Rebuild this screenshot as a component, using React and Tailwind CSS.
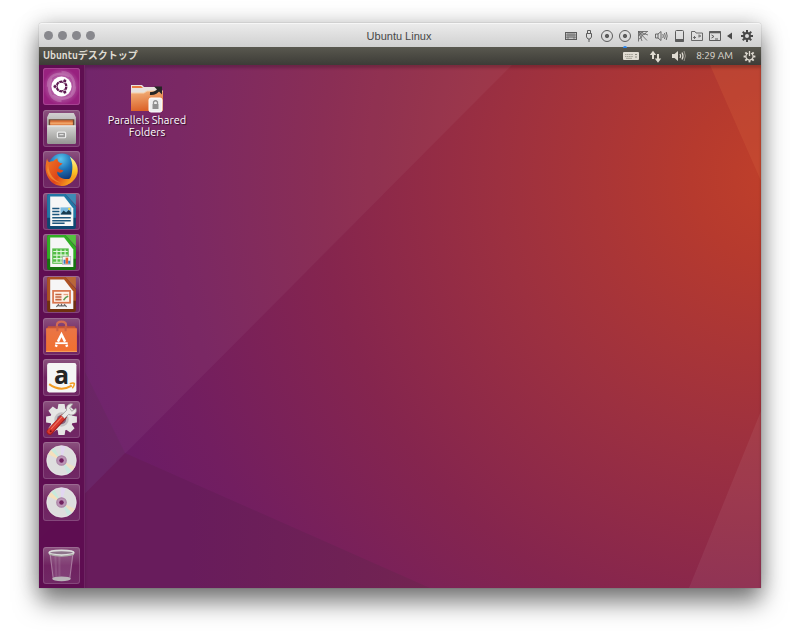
import React from "react";

function Wallpaper() {
  return (
    <svg className="absolute inset-0 size-full" viewBox="0 0 722 523" preserveAspectRatio="none" aria-hidden="true">
      <defs>
        <radialGradient id="base" gradientUnits="userSpaceOnUse" cx="740" cy="110" r="740">
          <stop offset="0" stopColor="#c0402a" />
          <stop offset="0.12" stopColor="#b63a2e" />
          <stop offset="0.38" stopColor="#9c3040" />
          <stop offset="0.62" stopColor="#85254e" />
          <stop offset="0.85" stopColor="#721e60" />
          <stop offset="1" stopColor="#681b68" />
        </radialGradient>
        <linearGradient id="shade" gradientUnits="userSpaceOnUse" x1="150" y1="520" x2="390" y2="523">
          <stop offset="0" stopColor="#681c5c" />
          <stop offset="1" stopColor="#732451" />
        </linearGradient>
      </defs>
      <rect width="722" height="523" fill="url(#base)" />
      <path d="M0 0H473L46 429L0 475Z" fill="#ffffff" fillOpacity="0.045" />
      <path d="M46 307L86 388L46 429L0 475V215Z" fill="#63285c" fillOpacity="0.4" />
      <path d="M86 388L391 523H0V475Z" fill="url(#shade)" />
      <path d="M671 0L722 116V0Z" fill="#cf5a38" fillOpacity="0.35" />
      <path d="M722 346L650 523H722Z" fill="#ffffff" fillOpacity="0.06" />
    </svg>
  );
}

function Svg({ children, box = "0 0 14 14", className = "size-[14px]" }) {
  return (
    <svg className={className} viewBox={box} fill="none" stroke="currentColor" strokeWidth="1" aria-hidden="true">
      {children}
    </svg>
  );
}

const gearTeeth = [0, 45, 90, 135, 180, 225, 270, 315];

function Disc() {
  return (
    <Svg>
      <circle cx="7" cy="7" r="5.500" />
      <circle cx="7" cy="7" r="1.700" fill="currentColor" />
    </Svg>
  );
}

const devices = [
  { name: "Keyboard", icon: (
    <Svg>
      <rect x="1.500" y="3.500" width="11" height="7" fill="#c4c4c4" />
      <path d="M2 6H12M2 8.200H12M4 4V8M6 4V8M8 4V8M10 4V8M4 8V10M10 8V10" strokeWidth=".7" />
    </Svg>
  ) },
  { name: "USB", icon: (
    <Svg>
      <path d="M5.500 4.500V1.500H8.500V4.500M4.500 4.500H9.500V8L8 10H6L4.500 8ZM7 10V13" />
    </Svg>
  ) },
  { name: "CD/DVD 1", icon: <Disc /> },
  { name: "CD/DVD 2", icon: <Disc />, active: true },
  { name: "Network", icon: (
    <Svg>
      <path d="M2 2.500H12M2.500 2V12.500M2.500 2.500L11 11.500M2.500 2.500L6 12M2.500 2.500L12 6M3 10Q6.500 9 6 6Q9.500 6 10.500 3M2.500 6.500Q5 6 4.500 4.500Q7 4 7 2.500" strokeWidth=".8" />
    </Svg>
  ) },
  { name: "Sound", icon: (
    <Svg>
      <path d="M1.500 5H4L7 2.500V11.500L4 9H1.500ZM4 5V9M8.800 5Q9.800 7 8.800 9M10.500 4Q12 7 10.500 10M12.200 3Q14.200 7 12.200 11" strokeWidth=".9" />
    </Svg>
  ) },
  { name: "Hard disk", icon: (
    <Svg>
      <rect x="3.500" y="1.500" width="8" height="11" rx="1" />
      <path d="M3.500 10.500H11.500V12.500H3.500Z" fill="currentColor" />
    </Svg>
  ) },
  { name: "Shared folders", icon: (
    <Svg>
      <path d="M1.500 2.500H5L6 4H12.500V11.500H1.500ZM3.500 8.500H6M5 7L3.500 8.500L5 10M8 7H10.500M9 5.500L10.500 7L9 8.500" strokeWidth=".9" />
    </Svg>
  ) },
  { name: "Console", icon: (
    <Svg>
      <path d="M1.500 2.500H12.500V11.500H1.500ZM3.500 6L6 7.500L3.500 9M7 10H10" />
      <path d="M1.500 3.300H12.500" strokeWidth="2" />
    </Svg>
  ) },
];

function TitleBar() {
  return (
    <header className="grid h-6 shrink-0 grid-cols-[1fr_auto_1fr] items-center rounded-t-[3px] border-t border-[#f6f6f6] bg-gradient-to-b from-[#ebebeb] to-[#d0d0d0] pr-[7px] pl-[5px] text-[#5c5c5c]">
      <div className="flex gap-[5px]">
        {["Close", "Minimize", "Full screen", "Coherence"].map((n) => (
          <button key={n} aria-label={n} className="size-[9px] rounded-full bg-[#88888d]" />
        ))}
      </div>
      <h1 className="font-[Liberation_Sans,Arial,sans-serif] text-[11px] leading-4 text-[#484848]">Ubuntu Linux</h1>
      <div className="flex items-center justify-end gap-1">
        {devices.map((d) => (
          <button key={d.name} aria-label={d.name} className="relative">
            {d.icon}
            {d.active && <span className="absolute -bottom-[5px] left-[5px] h-[2px] w-1 rounded-t-full bg-[#2583ef]" />}
          </button>
        ))}
        <button aria-label="Collapse">
          <Svg box="0 0 7 14" className="h-[14px] w-[7px] text-[#484848]">
            <path d="M6 3.500V10.500L1 7Z" fill="currentColor" stroke="none" />
          </Svg>
        </button>
        <button aria-label="Configure" className="ml-[3px] text-[#484848]">
          <Svg>
            {gearTeeth.map((a) => (
              <path key={a} d="M7 1V4" strokeWidth="2" transform={`rotate(${a} 7 7)`} />
            ))}
            <circle cx="7" cy="7" r="3" strokeWidth="2" />
          </Svg>
        </button>
      </div>
    </header>
  );
}

function TopPanel() {
  return (
    <div className="flex h-[18px] shrink-0 items-center justify-between bg-gradient-to-b from-[#59584f] to-[#3d3c37] pr-[5px] pl-1 font-[Ubuntu,Noto_Sans,Noto_Sans_CJK_JP,sans-serif] text-[#dfdbd2]">
      <span className="text-[10px] leading-4 font-bold">Ubuntuデスクトップ</span>
      <div className="flex items-center gap-[10px]">
        <button aria-label="Keyboard layout">
          <Svg box="0 0 16 10" className="h-[10px] w-4">
            <rect x="0" y="1" width="16" height="8" rx="1" fill="#dfdbd2" stroke="none" />
            <path d="M2 3.500H10M2 5.500H10" stroke="#a5a398" strokeDasharray="1.400 .4" />
            <path d="M3 7.300H9" stroke="#a5a398" />
            <path d="M12 3.500H14M12 6H14" stroke="#8c8b80" />
          </Svg>
        </button>
        <button aria-label="Network connection">
          <Svg box="0 0 13 13" className="size-[13px]">
            <path d="M4 3V9M9 4V10" strokeWidth="2" />
            <path d="M.8 5L4 .8L7.200 5ZM5.800 8.500L9 12.700L12.200 8.500Z" fill="currentColor" stroke="none" />
          </Svg>
        </button>
        <button aria-label="Volume">
          <Svg box="0 0 14 12" className="h-3 w-[14px]">
            <path d="M0 4H2.500L6 1V11L2.500 8H0Z" fill="currentColor" stroke="none" />
            <path d="M8 4Q9.300 6 8 8M10 2.500Q12 6 10 9.500" strokeWidth="1.300" />
            <path d="M12 1Q14.800 6 12 11" opacity=".5" />
          </Svg>
        </button>
        <time className="font-[Ubuntu,Open_Sans,sans-serif] text-[10px] leading-4">8:29 AM</time>
        <button aria-label="Session">
          <Svg box="0 0 13 13" className="size-[13px]">
            {gearTeeth.slice(1).map((a) => (
              <path key={a} d="M6.500 .6V2.800" strokeWidth="1.900" transform={`rotate(${a} 6.500 6.500)`} />
            ))}
            <path d="M5 3.200A3.600 3.600 0 1 0 8 3.200" strokeWidth="1.200" />
            <path d="M6.500 1V6" strokeWidth="1.300" />
          </Svg>
        </button>
      </div>
    </div>
  );
}

function Art({ children }) {
  return <svg className="absolute inset-0 size-full" viewBox="0 0 36 36" aria-hidden="true">{children}</svg>;
}

function Dash() {
  return (
    <Art>
      <defs>
        <radialGradient id="dash"><stop offset="0" stopColor="#e9b7df" /><stop offset=".6" stopColor="#b055a0" /><stop offset="1" stopColor="#98217f" /></radialGradient>
      </defs>
      <rect width="36" height="36" rx="3" fill="url(#dash)" />
      <g fill="none" stroke="#fff" strokeOpacity=".18" strokeWidth="2.500">
        <path d="M5 18C4 8 14 2 26 8M18 4C28 4 34 14 28 26M31 18C31 29 20 33 9 27M18 32C8 32 3 22 8 10" />
      </g>
      <circle cx="18" cy="18" r="9.800" fill="#fff" />
      <circle cx="18" cy="18" r="4.700" fill="none" stroke="#5f1a52" strokeWidth="2.300" />
      {[60, 180, 300].map((a) => (
        <circle key={a} cx="24.300" cy="18" r="1.900" fill="#5f1a52" stroke="#fff" strokeWidth=".7" transform={`rotate(${a} 18 18)`} />
      ))}
      {[0, 120, 240].map((a) => (
        <path key={a} d="M21.500 18H24.500" stroke="#fff" strokeWidth=".6" transform={`rotate(${a} 18 18)`} />
      ))}
    </Art>
  );
}

function Files() {
  return (
    <Art>
      <defs>
        <linearGradient id="cab" x1="0" y1="0" x2="0" y2="1"><stop offset="0" stopColor="#d6d6d4" /><stop offset="1" stopColor="#969694" /></linearGradient>
        <linearGradient id="lid" x1="0" y1="0" x2="0" y2="1"><stop offset="0" stopColor="#d2d0d0" /><stop offset=".3" stopColor="#b8b8b6" /></linearGradient>
      </defs>
      <path d="M6 3H30L32 7V32H4V7Z" fill="url(#lid)" />
      <rect x="5.500" y="9" width="25" height="8" fill="#6c4934" />
      <path d="M7 10H29V17H7Z" fill="#d9733a" />
      <path d="M7 12H29V14H7Z" fill="#f0a468" />
      <path d="M4 15H32V32Q32 33 31 33H5Q4 33 4 32Z" fill="url(#cab)" />
      <path d="M4.500 15.500H31.500" stroke="#eee" />
      <rect x="14" y="21.500" width="8" height="5.500" rx="1" fill="#999" stroke="#eee" strokeWidth="1.200" />
      <path d="M16 24H20" stroke="#eee" />
    </Art>
  );
}

function Firefox() {
  return (
    <Art>
      <defs>
        <radialGradient id="globe" cx=".45" cy=".2" r=".8"><stop offset="0" stopColor="#5cc6ee" /><stop offset=".5" stopColor="#1c73b8" /><stop offset="1" stopColor="#12306f" /></radialGradient>
        <linearGradient id="fox" x1="0" y1="0" x2="1" y2=".6"><stop offset="0" stopColor="#ef7a24" /><stop offset=".6" stopColor="#df4519" /><stop offset="1" stopColor="#f6a21d" /></linearGradient>
        <linearGradient id="tail" x1="0" y1="0" x2="0" y2="1"><stop offset="0" stopColor="#fff4a0" /><stop offset=".5" stopColor="#fbc526" /><stop offset="1" stopColor="#ea6d1b" /></linearGradient>
      </defs>
      <circle cx="18.500" cy="16" r="13.500" fill="url(#globe)" />
      <path d="M26 5.500C32 9 35 16 33.500 22C31 31 23 34 17 34C23 31 27 28 28 22C29 16 29 11 26 5.500Z" fill="url(#tail)" />
      <path d="M4 7C2.500 12 2 17 3 21C5 29 11 34 18 34C25 34 30 29 31 23C28 27 24 28 20 27C16 26 13 23 14 20C16 22 19 21 20 19C18 18 15 18 15 16C16 14 18 14 19 12C16 12 14 10 14 7C12 8 11 9 10 10C8 10 7 10 6 11C5 10 4 9 4 7Z" fill="url(#fox)" />
      <path d="M5 12C5 19 8 27 17 31C11 30 5 26 4 19Z" fill="#f7a33d" opacity=".6" />
    </Art>
  );
}

function Office({ edge, dark, corner, children }) {
  return (
    <Art>
      <path d="M6 1H22L32 13V33Q32 35 30 35H6Q4 35 4 33V3Q4 1 6 1Z" fill={dark} />
      <path d="M6 1H22L32 13V24H4V3Q4 1 6 1Z" fill={edge} />
      <path d="M7 3.500H20.500L29.500 15V32H7Z" fill="#f6f6f6" />
      <path d="M22 1H32V12Z" fill={corner} />
      {children}
    </Art>
  );
}

function Writer() {
  return (
    <Office edge="#2277a5" dark="#0e4772" corner="#3e8ab5">
      <path d="M9 15H16M9 18H16M9 21H16M9 24H27M9 27H27M9 29.500H21" stroke="#1d567d" strokeWidth="1.500" />
      <rect x="17" y="14" width="10.500" height="7" fill="#7cbbe0" />
      <path d="M17 21L20 17L22.500 19L25 16.500L27.500 19V21Z" fill="#173a50" />
      <circle cx="25.500" cy="15.500" r="1.100" fill="#f8d648" />
    </Office>
  );
}

function Calc() {
  return (
    <Office edge="#31ad25" dark="#16740f" corner="#55c040">
      <rect x="9" y="14" width="16" height="15" fill="#54bd47" />
      <path d="M10 17H24M10 20.500H24M10 24H24M10 27.500H24M13.500 15V28M17.500 15V28M21.500 15V28" stroke="#e0f6dc" strokeWidth="1.100" />
      <rect x="19" y="22" width="8" height="7.500" fill="#f4f4f4" stroke="#aaa" strokeWidth=".6" />
      <path d="M20 25H22V29H20Z" fill="#3280c5" /><path d="M22 23H24.500V29H22Z" fill="#e9632e" /><path d="M24.500 26H26.500V29H24.500Z" fill="#3280c5" />
    </Office>
  );
}

function Impress() {
  return (
    <Office edge="#ac5123" dark="#70310f" corner="#ba6738">
      <rect x="9.800" y="14.500" width="16.500" height="11.500" fill="#fff0e5" stroke="#d8754d" strokeWidth="1.700" />
      <path d="M12 18H18M12 20.500H18M12 23H18" stroke="#c2643f" strokeWidth="1.500" />
      <path d="M20 18H24.500" stroke="#e7a37f" strokeWidth="1.200" />
      <path d="M20 23.500L22 21L24.500 19.500" stroke="#5c9b52" strokeWidth="1.500" fill="none" />
      <path d="M18 27V29M13 30L15.500 27.500M23 30L20.500 27.500M15 29H21" stroke="#666" strokeWidth="1.200" />
    </Office>
  );
}

function Software() {
  return (
    <Art>
      <defs><linearGradient id="bag" x1="0" y1="0" x2="0" y2="1"><stop offset="0" stopColor="#e97546" /><stop offset="1" stopColor="#f2702f" /></linearGradient></defs>
      <path d="M13.500 13V7Q13.500 3.500 18 3.500Q22.500 3.500 22.500 7V13" fill="none" stroke="#d36c54" strokeWidth="2" />
      <path d="M5 8H31L33 12H3Z" fill="#c65437" />
      <path d="M3 10H33V33H3Z" fill="url(#bag)" />
      <path d="M14 8V13M22 8V13" stroke="#ca6045" strokeWidth="2" />
      <path d="M3 32.500H33" stroke="#f6a15d" />
      <path d="M14.500 23L18 16L21.500 23M13.200 26L12.500 28M22.800 26L23.500 28" fill="none" stroke="#fff" strokeWidth="2.400" />
      <path d="M12 24.500H24" stroke="#fff" strokeWidth="1.800" />
    </Art>
  );
}

function Amazon() {
  return (
    <>
      <Art>
        <rect x="4" y="4" width="28.500" height="28.500" rx="2" fill="#f5f5f5" />
        <path d="M6 24.500Q17 32.500 28 26" fill="none" stroke="#f39b21" strokeWidth="2" />
        <path d="M26 24Q30 22.500 30.500 24Q30.500 26 28.500 28.500" fill="none" stroke="#f39b21" strokeWidth="1.500" />
      </Art>
      <span aria-hidden="true" className="absolute inset-x-0 top-0 text-center font-[Open_Sans,sans-serif] text-[25px] leading-[30px] font-bold text-[#252525]">a</span>
    </>
  );
}

function Settings() {
  return (
    <Art>
      {gearTeeth.map((a) => (
        <path key={a} d="M14 9L15 3H21L22 9Z" fill="#e4e4e3" transform={`rotate(${a} 18 18)`} />
      ))}
      <circle cx="18" cy="18" r="9" fill="#c3c0c2" stroke="#e6e6e5" strokeWidth="4" />
      <circle cx="18" cy="18" r="4.500" fill="#83617f" />
      <path d="M6.500 30L20 15.500" stroke="#a01d1d" strokeWidth="6" strokeLinecap="round" />
      <path d="M6.500 29.500L20 15" stroke="#d8382f" strokeWidth="4.500" strokeLinecap="round" />
      <path d="M8 27L19 15" stroke="#f17a68" strokeWidth="1" />
      <path d="M18 14L23 9C22 4 26 2 29 3L26 7L28 10L32 7C34 12 29 15 25 13L21 17Z" fill="#e9e9e7" stroke="#9b9798" strokeWidth=".8" />
      <circle cx="7.500" cy="29.500" r="1" fill="#7a1515" />
    </Art>
  );
}

function DiscArt() {
  return (
    <Art>
      <circle cx="18" cy="18" r="14.400" fill="#dedede" stroke="#f0f0f0" strokeWidth=".6" />
      <path d="M18 18L5 12A14.300 14.300 0 0 1 8 8Z" fill="#f5e0bc" />
      <path d="M18 18L8 8A14.300 14.300 0 0 1 11 5.500Z" fill="#c8eadb" />
      <path d="M18 18L17 3.700A14.300 14.300 0 0 1 22 4.300Z" fill="#e2d6f1" />
      <path d="M18 18L31 24A14.300 14.300 0 0 1 28 28Z" fill="#efdfc4" />
      <path d="M18 18L28 28A14.300 14.300 0 0 1 24 31Z" fill="#c9e7e0" />
      <circle cx="18" cy="18" r="4.600" fill="#bd96b8" stroke="#ab85a6" strokeWidth="1.200" />
      <circle cx="18" cy="18" r="2.200" fill="#70205f" />
    </Art>
  );
}

function Trash() {
  return (
    <Art>
      <path d="M6 6L9.500 32H26.500L30 6Z" fill="#fff" fillOpacity=".12" />
      <path d="M12 9L13 29M16 9V29" stroke="#fff" strokeOpacity=".1" strokeWidth="2" />
      <path d="M7 7L10 31M29 7L26 31" stroke="#fff" strokeOpacity=".3" />
      <ellipse cx="18" cy="31" rx="9" ry="2.400" fill="#b9b4b8" />
      <ellipse cx="18" cy="5.500" rx="12" ry="2.300" fill="#8e748b" stroke="#dedede" strokeWidth="1.700" />
      <path d="M6 7Q18 11 30 7" fill="none" stroke="#aeb0a9" strokeWidth="1.200" />
    </Art>
  );
}

const apps = [
  ["Search your computer", Dash],
  ["Files", Files],
  ["Firefox Web Browser", Firefox],
  ["LibreOffice Writer", Writer],
  ["LibreOffice Calc", Calc],
  ["LibreOffice Impress", Impress],
  ["Ubuntu Software", Software],
  ["Amazon", Amazon],
  ["System Settings", Settings],
  ["Disc 1", DiscArt],
  ["Disc 2", DiscArt],
];

function Tile({ name, Icon }) {
  return (
    <button aria-label={name} className="relative block size-[37px] rounded-[3px] bg-gradient-to-b from-[#8b527f] via-[#6f2160] to-[#702865]">
      <Icon />
      <span className="absolute inset-0 rounded-[3px] inset-ring inset-ring-white/15" />
    </button>
  );
}

function Launcher() {
  return (
    <nav aria-label="Launcher" className="flex w-[46px] shrink-0 flex-col items-center border-r border-white/10 bg-[#5e0d50]/95 pt-[3px] pb-1">
      <div className="mb-[26px] flex flex-1 flex-col justify-between">
        {apps.map(([name, Icon]) => <Tile key={name} name={name} Icon={Icon} />)}
      </div>
      <Tile name="Trash" Icon={Trash} />
    </nav>
  );
}

function SharedFolder() {
  return (
    <button className="flex w-24 flex-col items-center text-white">
      <svg className="h-[30px] w-9" viewBox="0 0 36 30" aria-hidden="true">
        <defs><linearGradient id="folder" x1="0" y1="0" x2=".2" y2="1"><stop offset="0" stopColor="#f3b37c" /><stop offset="1" stopColor="#dc6329" /></linearGradient></defs>
        <path d="M2 1H13L15 3H33V27H2Z" fill="#e8e2dd" />
        <path d="M3 2H12L14 4H3Z" fill="#e87b40" />
        <path d="M2 9H15L18 7H34V27H2Z" fill="url(#folder)" />
        <path d="M2 9H15L18 7H34" stroke="#f6d0ab" fill="none" />
        <path d="M21 9.500Q27 10 30 5" fill="none" stroke="#252525" strokeWidth="3" />
        <path d="M25 2.500H33V10.500Z" fill="#252525" />
        <rect x="20" y="14" width="13" height="14" rx="2" fill="#eee" stroke="#fff" />
        <rect x="23.500" y="20" width="6" height="5" fill="#909090" />
        <path d="M24.500 20V18Q26.500 15.500 28.500 18V20" fill="none" stroke="#909090" strokeWidth="1.300" />
      </svg>
      <span className="font-[Ubuntu,Noto_Sans,sans-serif] text-[11px] leading-3 whitespace-nowrap text-shadow-[1px_1px_1px_#000000a0]">Parallels Shared<br />Folders</span>
    </button>
  );
}

export default function App() {
  return (
    <div className="flex h-screen min-h-[640px] flex-col bg-white px-[39px] pt-[23px] pb-14">
      <main className="flex flex-1 flex-col rounded-t-[3px] shadow-[0_14px_24px_rgba(0,0,0,0.5),0_0_22px_rgba(0,0,0,0.18),0_0_1px_rgba(0,0,0,0.5)]">
        <TitleBar />
        <TopPanel />
        <section className="relative isolate flex flex-1 overflow-hidden">
          <div className="absolute inset-0 -z-10"><Wallpaper /></div>
          <Launcher />
          <div className="flex flex-1 items-start pt-[19px] pl-[14px] shadow-[inset_0_3px_3px_rgba(0,0,0,0.2)]">
            <SharedFolder />
          </div>
        </section>
      </main>
    </div>
  );
}
